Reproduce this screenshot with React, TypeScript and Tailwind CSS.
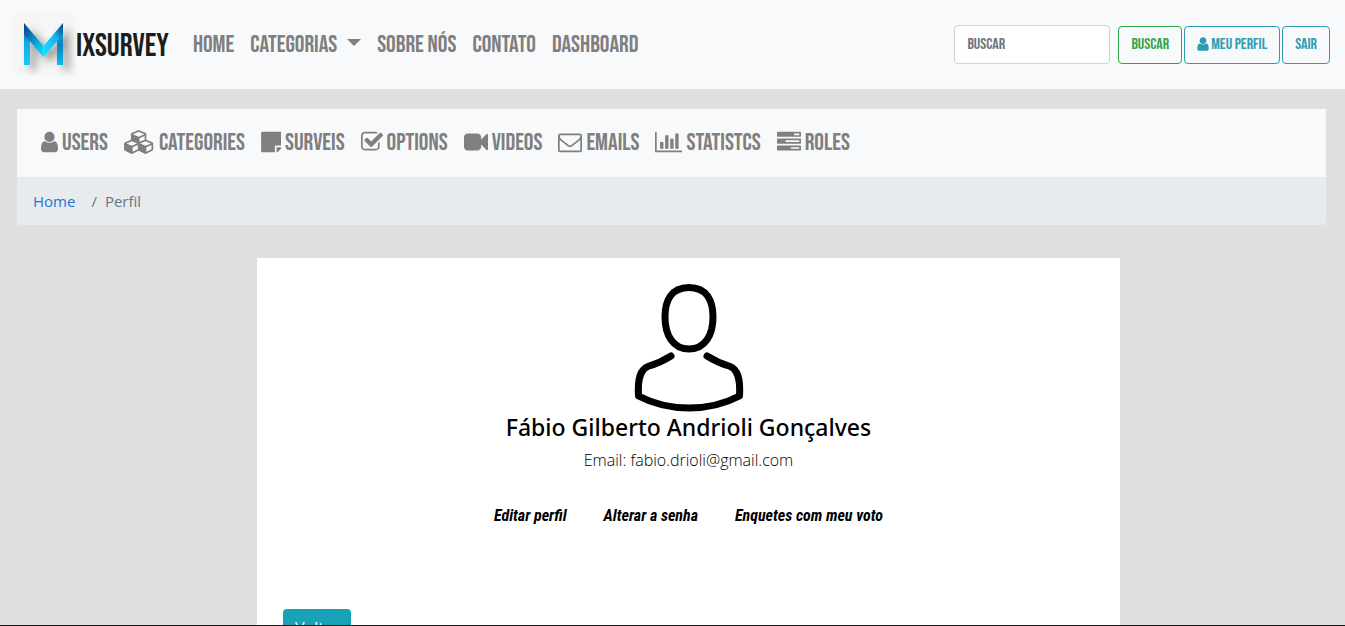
import type { ReactNode } from "react";

type IconProps = { viewBox: string; d: string; className: string };

function Icon({ viewBox, d, className }: IconProps) {
  return (
    <svg viewBox={viewBox} className={className} fill="currentColor" aria-hidden="true">
      <path d={d} />
    </svg>
  );
}

const USER =
  "M1536 1399q0 109-62.5 187t-150.5 78h-854q-88 0-150.5-78t-62.5-187q0-85 8.5-160.5t31.5-152 58.5-131 94-89 134.5-34.5q131 128 313 128t313-128q76 0 134.5 34.5t94 89 58.5 131 31.5 152 8.5 160.5zm-256-887q0 159-112.5 271.5t-271.5 112.5-271.5-112.5-112.5-271.5 112.5-271.5 271.5-112.5 271.5 112.5 112.5 271.5z";
const CUBES =
  "M640 1632l384-192v-314l-384 164v342zm-64-454l404-173-404-173-404 173zm1088 454l384-192v-314l-384 164v342zm-64-454l404-173-404-173-404 173zm-448-293l384-165v-266l-384 164v267zm-64-379l441-189-441-189-441 189zm1088 518v416q0 36-19 67t-52 47l-448 224q-25 14-57 14t-57-14l-448-224q-4-2-7-4-2 2-7 4l-448 224q-25 14-57 14t-57-14l-448-224q-33-16-52-47t-19-67v-416q0-38 21.5-70t56.5-48l434-186v-400q0-38 21.5-70t56.5-48l448-192q23-10 50-10t50 10l448 192q35 16 56.5 48t21.5 70v400l434 186q36 16 57 48t21 70z";
const NOTE =
  "M1152 1248v416h-928q-40 0-68-28t-28-68v-1344q0-40 28-68t68-28h1344q40 0 68 28t28 68v928h-416q-40 0-68 28t-28 68zm128 32h381q-15 82-65 132l-184 184q-50 50-132 65v-381z";
const CHECK =
  "M1472 930v318q0 119-84.5 203.5t-203.5 84.5h-832q-119 0-203.5-84.5t-84.5-203.5v-832q0-119 84.5-203.5t203.5-84.5h832q63 0 117 25 15 7 18 23 3 17-9 29l-49 49q-10 10-23 10-3 0-9-2-23-6-45-6h-832q-66 0-113 47t-47 113v832q0 66 47 113t113 47h832q66 0 113-47t47-113v-254q0-13 9-22l64-64q10-10 23-10 6 0 12 3 20 8 20 29zm231-489l-814 814q-24 24-57 24t-57-24l-430-430q-24-24-24-57t24-57l110-110q24-24 57-24t57 24l263 263 647-647q24-24 57-24t57 24l110 110q24 24 24 57t-24 57z";
const VIDEO =
  "M1792 352v1088q0 42-39 59-13 5-25 5-27 0-45-19l-403-403v166q0 119-84.5 203.5t-203.5 84.5h-704q-119 0-203.5-84.5t-84.5-203.5v-704q0-119 84.5-203.5t203.5-84.5h704q119 0 203.5 84.5t84.5 203.5v165l403-402q18-19 45-19 12 0 25 5 39 17 39 59z";
const ENVELOPE =
  "M1664 1504v-768q-32 36-69 66-268 206-426 338-51 43-83 67t-86.5 48.5-102.5 24.5h-2q-48 0-102.5-24.5t-86.5-48.5-83-67q-158-132-426-338-37-30-69-66v768q0 13 9.5 22.5t22.5 9.5h1472q13 0 22.5-9.5t9.5-22.5zm0-1051v-24.5l-.5-13-3-12.5-5.5-9-9-7.5-14-2.5h-1472q-13 0-22.5 9.5t-9.5 22.5q0 168 147 284 193 152 401 317 6 5 35 29.5t46 37.5 44.5 31.5 50.5 27.5 43 9h2q20 0 43-9t50.5-27.5 44.5-31.5 46-37.5 35-29.5q208-165 401-317 54-43 100.5-115.5t46.5-131.5zm128-37v1088q0 66-47 113t-113 47h-1472q-66 0-113-47t-47-113v-1088q0-66 47-113t113-47h1472q66 0 113 47t47 113z";
const CHART =
  "M640 896v512h-256v-512h256zm384-512v1024h-256v-1024h256zm1024 1152v128h-2048v-1536h128v1408h1920zm-640-896v768h-256v-768h256zm384-384v1152h-256v-1152h256z";
const TASKS =
  "M1024 1408h640v-128h-640v128zm-384-512h1024v-128h-1024v128zm640-512h384v-128h-384v128zm512 832v256q0 26-19 45t-45 19h-1664q-26 0-45-19t-19-45v-256q0-26 19-45t45-19h1664q26 0 45 19t19 45zm0-512v256q0 26-19 45t-45 19h-1664q-26 0-45-19t-19-45v-256q0-26 19-45t45-19h1664q26 0 45 19t19 45zm0-512v256q0 26-19 45t-45 19h-1664q-26 0-45-19t-19-45v-256q0-26 19-45t45-19h1664q26 0 45 19t19 45z";

const adminLinks: { label: string; icon: IconProps }[] = [
  { label: "Users", icon: { viewBox: "256 0 1280 1792", d: USER, className: "h-6 w-[17px]" } },
  { label: "Categories", icon: { viewBox: "0 0 2304 1792", d: CUBES, className: "h-6 w-[31px]" } },
  { label: "Surveis", icon: { viewBox: "128 0 1472 1792", d: NOTE, className: "h-6 w-5" } },
  { label: "Options", icon: { viewBox: "64 0 1664 1792", d: CHECK, className: "h-6 w-[22px]" } },
  { label: "Videos", icon: { viewBox: "0 0 1792 1792", d: VIDEO, className: "size-6" } },
  { label: "Emails", icon: { viewBox: "0 0 1792 1792", d: ENVELOPE, className: "size-6" } },
  { label: "Statistcs", icon: { viewBox: "0 0 2048 1792", d: CHART, className: "h-6 w-[27px]" } },
  { label: "Roles", icon: { viewBox: "0 0 1792 1792", d: TASKS, className: "size-6" } },
];

function Logo() {
  return (
    <svg viewBox="0 0 63 63" className="size-[63px]" aria-hidden="true">
      <defs>
        <linearGradient id="leftBar" x1="0" y1="0" x2="0" y2="1">
          <stop offset="0" stopColor="#0b4a86" />
          <stop offset="0.45" stopColor="#12a8e4" />
          <stop offset="1" stopColor="#14ccfb" />
        </linearGradient>
        <linearGradient id="rightBar" x1="0" y1="0" x2="0" y2="1">
          <stop offset="0" stopColor="#18c0f5" />
          <stop offset="0.5" stopColor="#0d80bc" />
          <stop offset="1" stopColor="#12b8ee" />
        </linearGradient>
        <linearGradient id="leftArm" x1="0" y1="0" x2="1" y2="1">
          <stop offset="0" stopColor="#0a3f78" />
          <stop offset="0.45" stopColor="#0d86c8" />
          <stop offset="1" stopColor="#10eaff" />
        </linearGradient>
        <linearGradient id="rightArm" x1="1" y1="0" x2="0" y2="1">
          <stop offset="0" stopColor="#0a3f78" />
          <stop offset="0.4" stopColor="#14b4f0" />
          <stop offset="1" stopColor="#10eaff" />
        </linearGradient>
        <filter id="logoShadow" x="-40%" y="-40%" width="190%" height="190%">
          <feDropShadow dx="6" dy="5" stdDeviation="4.5" floodColor="#000" floodOpacity="0.4" />
        </filter>
      </defs>
      <rect width="63" height="63" fill="#f6f6f6" />
      <g filter="url(#logoShadow)">
        <path d="M11 11v41h6V26z" fill="url(#leftBar)" />
        <path d="M50 11v41h-6V26z" fill="url(#rightBar)" />
        <path d="M11 10l19.500 23v11.500L11 21z" fill="url(#leftArm)" />
        <path d="M50 10L30.500 33v11.500L50 21z" fill="url(#rightArm)" />
      </g>
    </svg>
  );
}

function NavLink({ children }: { children: ReactNode }) {
  return (
    <a href="#" className="flex items-center text-2xl text-[#7f7f80]">
      {children}
    </a>
  );
}

export default function App() {
  return (
    <div className="min-h-screen bg-[#dfdfdf] font-['Open_Sans','Noto_Sans',sans-serif] text-black">
      <header className="flex items-center bg-[#f8f9fb] py-[13px] pr-[15px] pl-[13px] font-['Bebas_Neue','Roboto_Condensed',sans-serif]">
        <a href="#" className="flex items-center text-[32px] text-[#1c1d1d]">
          <Logo />
          <span className="pt-1">IXSURVEY</span>
        </a>
        <nav className="ml-6 flex items-center gap-4">
          <NavLink>Home</NavLink>
          <button type="button" className="flex items-center gap-[10px] text-2xl text-[#7f7f80]">
            Categorias
            <svg viewBox="0 0 14 7" className="-mt-1 h-[7px] w-[14px]" fill="currentColor" aria-hidden="true">
              <path d="M0 0h14L7 7z" />
            </svg>
          </button>
          <NavLink>Sobre Nós</NavLink>
          <NavLink>Contato</NavLink>
          <NavLink>Dashboard</NavLink>
        </nav>
        <form className="ml-auto flex items-center">
          <input
            type="search"
            aria-label="Buscar"
            placeholder="Buscar"
            className="mr-2 h-[39px] w-[156px] rounded border border-[#ced4da] bg-white px-3 placeholder:text-[#6c757d]"
          />
          <div className="flex gap-[2px]">
            <button type="button" className="h-[38px] rounded border border-[#28a745] px-3 text-[#35a24c]">
              Buscar
            </button>
            <button type="button" className="flex h-[38px] items-center gap-[2px] rounded border border-[#2a9db0] px-3 text-[#2a9db0]">
              <span className="mb-[2px]">
                <Icon viewBox="256 0 1280 1792" d={USER} className="h-4 w-3" />
              </span>
              Meu Perfil
            </button>
            <button type="button" className="h-[38px] rounded border border-[#2a9db0] px-3 text-[#2a9db0]">
              Sair
            </button>
          </div>
        </form>
      </header>

      <main className="pt-5 pr-[19px] pl-[17px]">
        <nav className="flex h-[68px] items-center gap-4 bg-[#f8f9fb] px-6 font-['Bebas_Neue','Roboto_Condensed',sans-serif]">
          {adminLinks.map(({ label, icon }) => (
            <NavLink key={label}>
              <span className="mr-1 mb-[2px]">
                <Icon {...icon} />
              </span>
              {label}
            </NavLink>
          ))}
        </nav>
        <ol className="flex h-12 items-center rounded-b bg-[#e7ebee] px-4 font-light text-[#6c757d]">
          <li className="mr-4">
            <a href="#" className="font-normal text-[15px] text-[#1f74dc]">
              Home
            </a>
          </li>
          <li className="flex gap-2 text-[15px] font-normal">
            <span>/</span>
            <span>Perfil</span>
          </li>
        </ol>

        <div className="pt-[33px] pl-[34px]">
          <section className="mx-auto flex max-w-[863px] flex-col items-center bg-white px-[26px] pt-[26px] pb-6">
            <svg
              viewBox="0 0 110 128"
              className="h-32 w-[110px]"
              fill="none"
              stroke="#000"
              strokeWidth="7"
              strokeLinecap="round"
              strokeLinejoin="round"
              aria-hidden="true"
            >
              <path d="M55 3.500C73 3.500 79 17 79 33C79 51 71 65 55 65C39 65 31 51 31 33C31 17 37 3.500 55 3.500Z" />
              <path d="M37 72C29 77 22 80 15 82C6 85 3.500 95 4.500 112C35 128 75 128 105.500 112C106.500 95 104 85 95 82C88 80 81 77 73 72" />
            </svg>
            <h1 className="font-['Noto_Sans','Open_Sans',sans-serif] text-[23px] leading-[30px] font-medium">
              Fábio Gilberto Andrioli Gonçalves
            </h1>
            <p className="mt-[6px] leading-6 font-light">Email: fabio.drioli@gmail.com</p>
            <div className="mt-8 flex gap-[37px] font-['Roboto_Condensed',Roboto,sans-serif] leading-6 font-bold italic">
              <a href="#">Editar perfil</a>
              <a href="#">Alterar a senha</a>
              <a href="#">Enquetes com meu voto</a>
            </div>
            <button type="button" className="mt-[81px] h-[38px] self-start rounded bg-[#17a2b8] px-3 text-white">
              Voltar
            </button>
          </section>
        </div>
      </main>
      <div className="fixed inset-x-0 bottom-0 h-px bg-[#17181a]" />
    </div>
  );
}
